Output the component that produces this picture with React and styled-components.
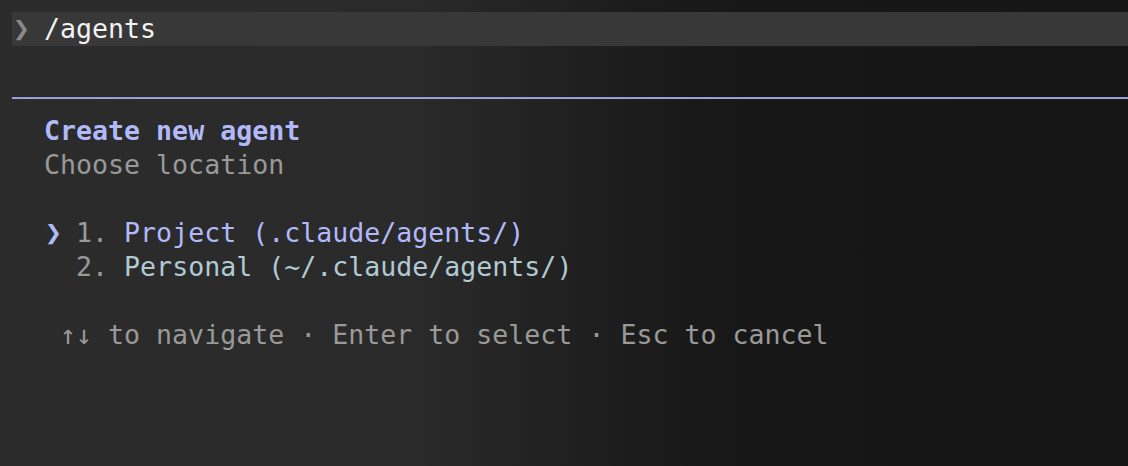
import React from 'react';
import styled, { createGlobalStyle } from 'styled-components';

const GlobalStyle = createGlobalStyle`
  html, body {
    margin: 0;
    padding: 0;
    height: 100%;
  }
  body {
    background: linear-gradient(90deg, #2b2b2b 0%, #2a2a2a 37%, #1c1c1c 56%, #171717 66%, #161616 100%);
    font-family: "DejaVu Sans Mono", "Liberation Mono", monospace;
    -webkit-font-smoothing: antialiased;
  }
`;

const Screen = styled.div`
  width: 1128px;
  height: 466px;
  padding: 12px 0 0 12px;
  box-sizing: border-box;
  font-size: 26.6px;
  line-height: 34px;
  color: #999999;
`;

// one terminal row, on the 16px character grid
const Line = styled.div`
  height: 34px;
  white-space: pre;
`;

const InputBar = styled(Line)`
  background: #383838;
  color: #f2f2f2;
`;

const Chevron = styled.span`
  display: inline-block;
  width: ${(p) => p.$cols * 16}px;
  padding-left: 1px;
  box-sizing: border-box;
  font-size: 28px;
  font-weight: bold;
  color: ${(p) => p.$color};
`;

const Divider = styled.div`
  height: 34px;
  display: flex;
  align-items: center;
  &::after {
    content: '';
    flex: 1;
    height: 2px;
    margin-top: 1px;
    background: linear-gradient(180deg, #8c91cc 0%, #a6acee 100%);
  }
`;

const Title = styled.span`
  color: #b1b9f9;
  font-weight: bold;
`;

const Tone = styled.span`
  color: ${(p) => p.$color || '#999999'};
`;

const Blank = styled.span`
  display: inline-block;
  width: 16px;
`;

const options = [
  { n: 1, label: 'Project (.claude/agents/)', selected: true },
  { n: 2, label: 'Personal (~/.claude/agents/)', selected: false },
];

export default function App() {
  return (
    <>
      <GlobalStyle />
      <Screen>
        <InputBar>
          <Chevron $cols={2} $color="#8a8a8a">❯</Chevron>/agents
        </InputBar>
        <Line />
        <Divider />
        <Line>
          {'  '}
          <Title>Create new agent</Title>
        </Line>
        <Line>{'  Choose location'}</Line>
        <Line />
        {options.map((o) => (
          <Line key={o.n}>
            {'  '}
            {o.selected ? <Chevron $cols={1} $color="#b1b9f9">❯</Chevron> : <Blank />}
            {' '}
            <Tone>{o.n + '. '}</Tone>
            <Tone $color={o.selected ? '#b1b9f9' : '#b0c9d2'}>{o.label}</Tone>
          </Line>
        ))}
        <Line />
        <Line>{'   ↑↓ to navigate · Enter to select · Esc to cancel'}</Line>
      </Screen>
    </>
  );
}
